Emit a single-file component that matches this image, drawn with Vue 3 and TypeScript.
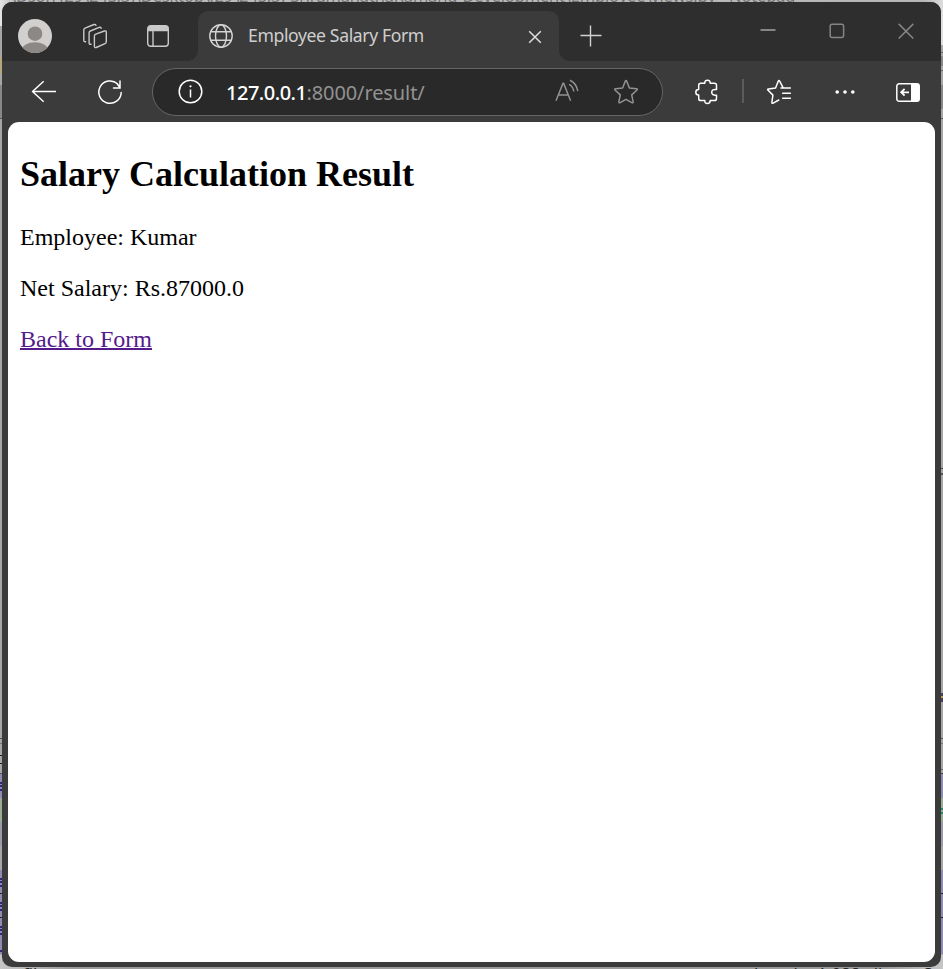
<script setup lang="ts">
interface Strip { side: 'left' | 'right'; top: number; height: number; color: string }

const employee = 'Kumar'
const netSalary = 'Rs.87000.0'

const strips: Strip[] = [
  { side: 'left', top: 0, height: 26, color: '#e4e4e4' },
  { side: 'left', top: 6, height: 1, color: '#999999' },
  { side: 'left', top: 57, height: 17, color: '#b5a87c' },
  { side: 'left', top: 85, height: 33, color: '#88888a' },
  { side: 'left', top: 118, height: 1, color: '#555555' },
  { side: 'left', top: 738, height: 1, color: '#555555' },
  { side: 'left', top: 743, height: 1, color: '#777777' },
  { side: 'left', top: 755, height: 1, color: '#222222' },
  { side: 'left', top: 763, height: 1, color: '#222222' },
  { side: 'left', top: 773, height: 1, color: '#555555' },
  { side: 'left', top: 774, height: 24, color: '#8d8bb0' },
  { side: 'left', top: 782, height: 2, color: '#30287c' },
  { side: 'left', top: 785, height: 2, color: '#30287c' },
  { side: 'left', top: 789, height: 2, color: '#30287c' },
  { side: 'left', top: 798, height: 24, color: '#9aac96' },
  { side: 'left', top: 822, height: 24, color: '#9c9aa8' },
  { side: 'left', top: 870, height: 84, color: '#8d8bb0' },
  { side: 'left', top: 878, height: 2, color: '#30287c' },
  { side: 'left', top: 881, height: 2, color: '#30287c' },
  { side: 'left', top: 885, height: 2, color: '#30287c' },
  { side: 'left', top: 893, height: 1, color: '#222222' },
  { side: 'left', top: 902, height: 2, color: '#30287c' },
  { side: 'left', top: 905, height: 2, color: '#30287c' },
  { side: 'left', top: 909, height: 2, color: '#30287c' },
  { side: 'left', top: 917, height: 1, color: '#222222' },
  { side: 'left', top: 926, height: 2, color: '#30287c' },
  { side: 'left', top: 929, height: 2, color: '#30287c' },
  { side: 'left', top: 933, height: 2, color: '#30287c' },
  { side: 'left', top: 950, height: 2, color: '#30287c' },
  { side: 'right', top: 0, height: 45, color: '#dedede' },
  { side: 'right', top: 52, height: 1, color: '#666666' },
  { side: 'right', top: 56, height: 10, color: '#888888' },
  { side: 'right', top: 70, height: 1, color: '#666666' },
  { side: 'right', top: 85, height: 24, color: '#888888' },
  { side: 'right', top: 118, height: 1, color: '#555555' },
  { side: 'right', top: 468, height: 1, color: '#444444' },
  { side: 'right', top: 473, height: 2, color: '#555555' },
  { side: 'right', top: 693, height: 9, color: '#4a405c' },
  { side: 'right', top: 696, height: 2, color: '#b49c55' },
  { side: 'right', top: 738, height: 1, color: '#555555' },
  { side: 'right', top: 743, height: 1, color: '#777777' },
  { side: 'right', top: 769, height: 1, color: '#666666' },
  { side: 'right', top: 773, height: 1, color: '#444444' },
  { side: 'right', top: 774, height: 24, color: '#8d8bb0' },
  { side: 'right', top: 798, height: 24, color: '#9aac96' },
  { side: 'right', top: 808, height: 2, color: '#28846c' },
  { side: 'right', top: 812, height: 2, color: '#28846c' },
  { side: 'right', top: 822, height: 24, color: '#9c9aa8' },
  { side: 'right', top: 870, height: 84, color: '#8d8bb0' },
  { side: 'right', top: 893, height: 1, color: '#222222' },
  { side: 'right', top: 917, height: 1, color: '#222222' },
]
</script>

<template>
  <div class="desktop">
    <i
      v-for="(s, i) in strips" :key="i" class="strip" :class="s.side"
      :style="{ top: s.top + 'px', height: s.height + 'px', background: s.color }"
    ></i>
    <div class="behind-title"><span>\Dson (29\24S.3)\Desktop\(29\24S.3)-SriramanathaRamanu-Development\Employee\views.py - Notepad++</span></div>
    <div class="behind-status"><span>file</span><span class="len">length : 1,088 &nbsp; lines : 3</span></div>

    <div class="window">
      <header class="tabstrip">
        <svg class="avatar" width="34" height="34" viewBox="0 0 34 34">
          <clipPath id="av"><circle cx="17" cy="17" r="17" /></clipPath>
          <g clip-path="url(#av)">
            <rect width="34" height="34" fill="#d2d0ce" />
            <circle cx="17" cy="14.7" r="7.3" fill="#8c8885" />
            <ellipse cx="17" cy="31" rx="13" ry="7.8" fill="#8c8885" />
          </g>
        </svg>
        <svg class="workspaces" width="26" height="26" viewBox="0 0 26 26" fill="none" stroke="#c9c9c9" stroke-width="1.4" stroke-linejoin="round" stroke-linecap="round">
          <path d="M13.8 11.2 22.4 8q1.9-.6 1.9 1.1v9.7q0 1.3-1.3 1.8l-8.8 3.9q-1.8.6-1.8-1.2V12.8q0-1.1 1.4-1.6Z" />
          <path d="M9 21.2q-1.9.5-1.9-1.3V9.8q0-1.3 1.2-1.8l8.9-3.6q1.5-.4 2 .9" />
          <path d="M3.7 18.7q-1.9.4-1.9-1.4V7q0-1.3 1.2-1.8l9-3.7q1.5-.4 2 .9" />
        </svg>
        <svg class="tabs-icon" width="22" height="22" viewBox="0 0 22 22" fill="none" stroke="#c9c9c9" stroke-width="1.4">
          <rect x=".7" y=".7" width="20.6" height="20.6" rx="3" />
          <path d="M1 3.7Q1 1 3.7 1h14.6Q21 1 21 3.7v2.5H1Z" fill="#c9c9c9" stroke="none" />
          <path d="M6 6v15" />
        </svg>
        <div class="tab">
          <svg class="globe" width="24" height="24" viewBox="0 0 24 24" fill="none" stroke="#d4d4d4" stroke-width="1.4">
            <circle cx="12" cy="12" r="11.2" /><ellipse cx="12" cy="12" rx="5.5" ry="11.2" />
            <path d="M1.7 7.7h20.6M1.7 16.3h20.6" />
          </svg>
          <span class="tab-title">Employee Salary Form</span>
          <svg class="tab-close" width="14" height="14" viewBox="0 0 14 14" stroke="#dedede" stroke-width="1.5"><path d="m1.2 1.2 11.6 11.6M12.8 1.2 1.2 12.8" /></svg>
        </div>
        <svg class="plus" width="22" height="22" viewBox="0 0 22 22" stroke="#d2d2d2" stroke-width="1.4"><path d="M10.5.5v21M.5 10.5h21" /></svg>
        <div class="controls">
          <svg width="16" height="16" viewBox="0 0 16 16"><path d="M.5 7h15" stroke="#858585" stroke-width="2" /></svg>
          <svg width="16" height="16" viewBox="0 0 16 16" fill="none" stroke="#858585" stroke-width="1.5"><rect x="1.2" y="1.2" width="13.4" height="13.4" rx="2" /></svg>
          <svg width="16" height="16" viewBox="0 0 16 16" stroke="#858585" stroke-width="1.5"><path d="m.7.9 14.6 14.6M15.3.9.7 15.5" /></svg>
        </div>
      </header>

      <nav class="toolbar">
        <svg class="back" width="26" height="24" viewBox="0 0 26 24" fill="none" stroke="#fff" stroke-width="1.5" stroke-linejoin="round"><path d="M25 11.5H1.2M12.7 1.2 1.5 11.5l11.2 10.3" /></svg>
        <svg class="reload" width="26" height="26" viewBox="0 0 26 26" fill="none" stroke="#fff" stroke-width="1.5" stroke-linecap="round"><path d="M20.5 4.8A11.2 11.2 0 1 0 24.2 13.5M23 2v7h-6.5M23 8.5 19.7 4.3" /></svg>
        <div class="address">
          <svg class="info" width="25" height="25" viewBox="0 0 25 25" fill="none" stroke="#fff" stroke-width="1.5"><circle cx="12.5" cy="12.5" r="11.3" /><path d="M12.5 10.5v8" /><circle cx="12.5" cy="7.3" r="1.1" fill="#fff" stroke="none" /></svg>
          <span class="url"><b>127.0.0.1</b>:8000/result/</span>
          <svg class="read" width="24" height="24" viewBox="0 0 24 24" fill="none" stroke="#929292" stroke-width="1.5"><path d="m1 21.8 7-17.5h.6l7 17.5M3.4 16h9.8" /><path d="M14 5.4q4 2 4.8 7.1M15 1.2q6.5 3 7.8 11" /></svg>
          <svg class="star" width="26" height="26" viewBox="0 0 26 26" fill="none" stroke="#929292" stroke-width="1.5" stroke-linejoin="round"><path d="M12.2 2.4q.8-1.6 1.6 0L16.4 9l6.9.7q1.8.3.5 1.5l-5.1 4.7 1.4 6.8q.2 1.7-1.3.9L13 20.3l-5.8 3.3q-1.5.8-1.3-.9l1.4-6.8-5.1-4.7Q.9 10 2.7 9.7L9.6 9Z" /></svg>
        </div>
        <svg class="puzzle" width="24" height="26" viewBox="0 0 24 26" fill="none" stroke="#fff" stroke-width="1.5" stroke-linejoin="round"><path d="M5.8 4.2h4Q9.6 1.2 12.5 1.2q2.8 0 2.7 3h4.1q2.2 0 2.2 2.1v4.2q-4.7-.5-4.8 2.8 0 3.4 4.8 2.9v3.3q0 2.1-2.2 2.1h-4.1q0 3-2.7 3-2.9 0-2.7-3h-4q-2.1 0-2.1-2.1v-3.4q-2.9 0-2.9-2.8 0-2.7 2.9-2.7V6.3q0-2.1 2.1-2.1Z" /></svg>
        <i class="divider"></i>
        <svg class="favorites" width="26" height="26" viewBox="0 0 26 26" fill="none" stroke="#fff" stroke-width="1.5" stroke-linejoin="round" stroke-linecap="round"><path d="M17 8.5 13.8 2.3q-.9-1.4-1.6 0L9.6 8.9l-7 1q-1.8.3-.5 1.4l4.8 4.8-1 7.1q-.2 1.7 1.3.9l5.6-3.1M15 9H24.4M16.7 14.2H24.4M16.7 19.3H24.4" /></svg>
        <svg class="dots" width="20" height="6" viewBox="0 0 20 6" fill="#fff"><circle cx="2.2" cy="3" r="1.8" /><circle cx="10" cy="3" r="1.8" /><circle cx="17.8" cy="3" r="1.8" /></svg>
        <svg class="sidebar" width="24" height="19" viewBox="0 0 24 19" fill="none" stroke="#fff" stroke-width="1.5"><rect x=".8" y=".8" width="22.4" height="17.4" rx="2.3" /><path d="M15 1h6q2.5 0 2.5 2.5v12q0 2.5-2.5 2.5h-6Z" fill="#fff" stroke="none" /><path d="M13 9.3H5.5M8.6 5.9 5.2 9.3l3.4 3.4" stroke-width="1.8" /></svg>
      </nav>

      <main class="page">
        <h2>Salary Calculation Result</h2>
        <p>Employee: {{ employee }}</p>
        <p>Net Salary: {{ netSalary }}</p>
        <a>Back to Form</a>
      </main>
    </div>
  </div>
</template>

<style>
body { background: #a9a9a9; overflow: hidden; }
</style>

<style scoped>
.desktop { position: relative; box-sizing: border-box; width: 943px; height: 969px; padding: 2px; overflow: hidden; background: #a6a6a6; font-family: "Noto Sans", sans-serif; }
svg { display: block; flex: none; }
.strip { position: absolute; width: 2px; }
.left { left: 0; }
.right { right: 0; }
.behind-title { position: absolute; top: 0; left: 0; width: 943px; height: 12px; overflow: hidden; background: linear-gradient(90deg, #e4e4e4 0, #bcbcbc 14px, #b7b7b7 925px, #dedede 943px); }
.behind-title span { position: absolute; left: 10px; top: -15px; font: 16.6px/22px "Open Sans", sans-serif; letter-spacing: -0.15px; white-space: nowrap; color: #707070; }
.behind-status { position: absolute; top: 955px; left: 0; width: 943px; height: 14px; overflow: hidden; background: linear-gradient(90deg, #c5c5c5 0, #9b9b9b 70px, #9b9b9b 880px, #c5c5c5 943px); font: 17px/22px "Open Sans", sans-serif; color: #222; }
.behind-status span { position: absolute; left: 23px; top: 8px; white-space: nowrap; }
.behind-status .len { left: 754px; }
.window { position: relative; box-sizing: border-box; width: 939px; height: 965px; display: flex; flex-direction: column; padding: 0 6px 5px; border-radius: 10px; overflow: hidden; background: #3b3b3b; }
.tabstrip { display: flex; height: 59px; flex: none; margin: 0 -6px; padding-left: 16px; background: #2e2e2e; box-sizing: border-box; }
.avatar { margin-top: 17px; }
.workspaces { margin: 21px 0 0 30px; }
.tabs-icon { margin: 23px 0 0 39px; }
.tab { position: relative; display: flex; box-sizing: border-box; width: 361px; height: 50px; margin: 9px 0 0 29px; padding: 13px 0 0 11px; background: #3b3b3b; border-radius: 10px 10px 0 0; }
.tab::before, .tab::after { content: ""; position: absolute; bottom: 0; width: 10px; height: 10px; }
.tab::before { left: -10px; background: radial-gradient(circle at 0 0, transparent 9.5px, #3b3b3b 10px); }
.tab::after { right: -10px; background: radial-gradient(circle at 100% 0, transparent 9.5px, #3b3b3b 10px); }
.tab-title { width: 270px; margin: -1px 0 0 15px; font-size: 17.6px; letter-spacing: -0.38px; line-height: 24px; color: #cfcfcf; white-space: nowrap; }
.tab-close { margin: 6px 0 0 10px; }
.plus { margin: 23px 0 0 21px; }
.controls { display: flex; gap: 53px; margin: 21px 0 0 158px; }
.toolbar { display: flex; align-items: center; height: 61px; flex: none; margin: 0 -6px; padding-left: 29px; }
.reload { margin-left: 40px; }
.address { display: flex; align-items: center; box-sizing: border-box; width: 511px; height: 48px; margin-left: 29px; padding-left: 25px; border: 1px solid #666; border-radius: 24px; background: #292929; }
.url { width: 329px; margin: 2px 0 0 23px; font-size: 20px; letter-spacing: -0.1px; line-height: 28px; color: #929292; white-space: nowrap; }
.url b { font-weight: 500; letter-spacing: -0.5px; color: #fff; }
.read { margin-top: -1px; }
.star { margin: 1px 0 0 34px; }
.puzzle { margin-left: 32px; }
.divider { width: 2px; height: 24px; margin: -2px 0 0 23px; background: #5b5b5b; }
.favorites { margin-left: 22px; }
.dots { margin-left: 43px; }
.sidebar { margin: 1px 0 0 41px; }
.page { flex: 1; padding: 12px; background: #fff; border-radius: 11px; font-family: "Liberation Serif", serif; font-size: 24px; color: #000; }
h2 { margin: 19px 0 29px; font-size: 36px; line-height: 42px; }
p { margin: 0 0 24px; line-height: 27px; }
a { line-height: 27px; color: #551a8b; text-decoration: underline; text-decoration-thickness: 2px; }
</style>
